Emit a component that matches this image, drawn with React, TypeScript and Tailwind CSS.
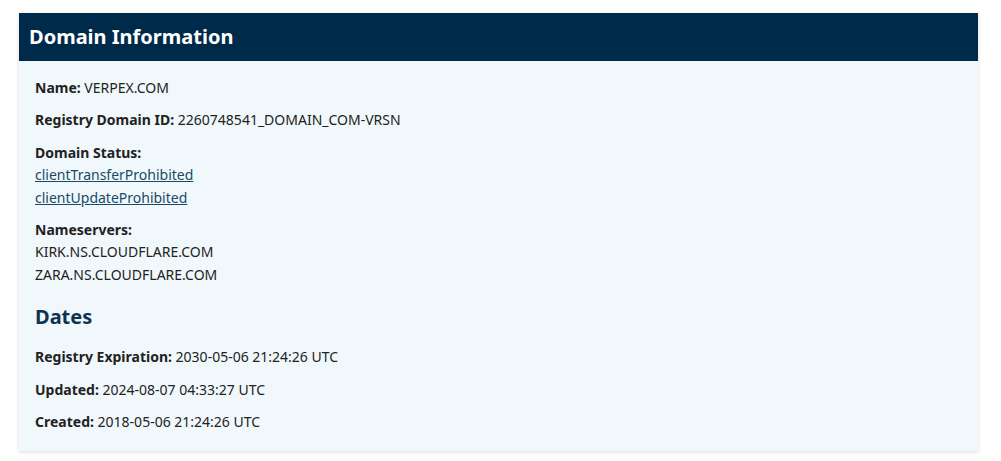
import React from 'react';

const Field: React.FC<{ label: string; children: React.ReactNode }> = ({ label, children }) => (
  <p className="mb-[10px]">
    <span className="font-bold">{label}:</span> {children}
  </p>
);

const App: React.FC = () => {
  return (
    <div className="min-h-screen bg-white px-[19px] pt-[13px] text-[14px] leading-[22.4px] text-[#222]" style={{ fontFamily: '"Noto Sans", "Open Sans", sans-serif' }}>
      <div className="bg-[#f1f8fc] shadow-[0_1px_4px_rgba(0,0,0,0.15)] w-[959px]">
        <div className="bg-[#002a4a] h-[48px] flex items-center px-[10px]">
          <h2 className="text-white text-[20px] font-bold">Domain Information</h2>
        </div>
        <div className="px-[16px] pt-[16px] pb-[8px]">
          <Field label="Name">VERPEX.COM</Field>
          <Field label="Registry Domain ID">2260748541_DOMAIN_COM-VRSN</Field>
          <div className="mb-[10px]">
            <p className="font-bold">Domain Status:</p>
            <a href="#" className="block w-fit underline text-[#1a4a66]">clientTransferProhibited</a>
            <a href="#" className="block w-fit underline text-[#1a4a66]">clientUpdateProhibited</a>
          </div>
          <div className="mb-[10px]">
            <p className="font-bold">Nameservers:</p>
            <p>KIRK.NS.CLOUDFLARE.COM</p>
            <p>ZARA.NS.CLOUDFLARE.COM</p>
          </div>
          <h3 className="mt-[17px] mb-[15px] text-[20px] leading-[28px] font-bold text-[#0d3350]">Dates</h3>
          <Field label="Registry Expiration">2030-05-06 21:24:26 UTC</Field>
          <Field label="Updated">2024-08-07 04:33:27 UTC</Field>
          <Field label="Created">2018-05-06 21:24:26 UTC</Field>
        </div>
      </div>
    </div>
  );
};

export default App;
